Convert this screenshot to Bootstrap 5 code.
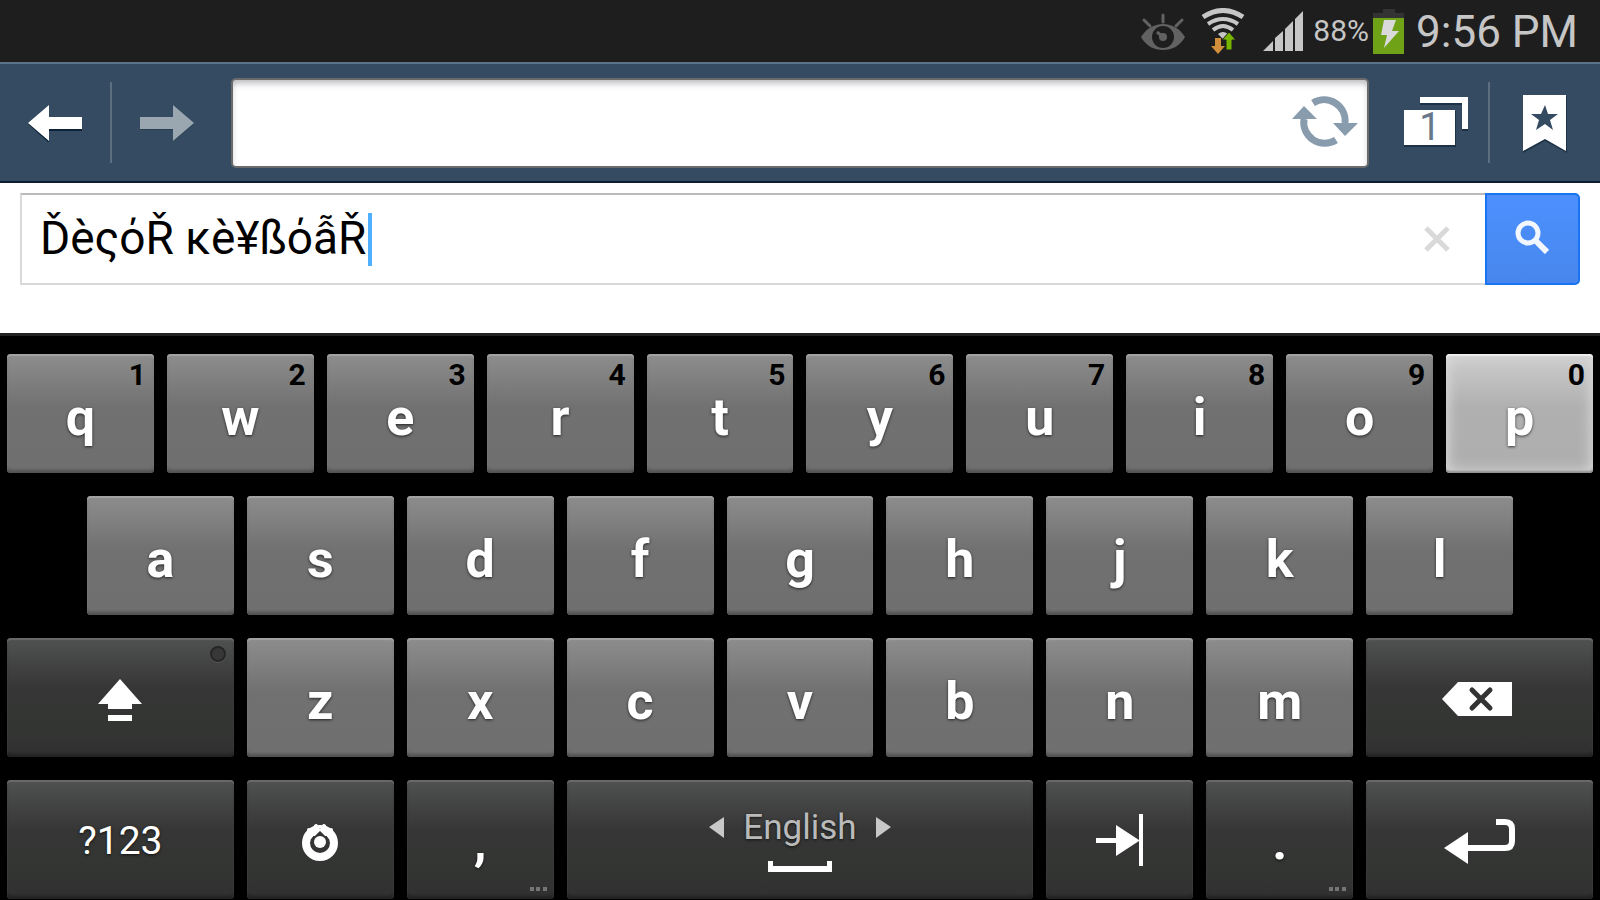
<!DOCTYPE html>
<html lang="en">
<head>
<meta charset="utf-8">
<meta name="viewport" content="width=device-width, initial-scale=1">
<title>Browser with keyboard</title>
<link href="https://cdn.jsdelivr.net/npm/bootstrap@5.3.0/dist/css/bootstrap.min.css" rel="stylesheet">
<style>
  body { font-family: Roboto, "Noto Sans", sans-serif; background: #000; }
  svg { display: block; flex: none; }

  .status { background: #1e1e1e; color: #c6c6c6; height: 62px; padding-right: 22px; line-height: 1; }
  .status .percent { font-size: 30px; }
  .status .clock { font-size: 44px; padding-top: 2px; }
  .status .eye { margin-right: 16px; }
  .status .wifi { margin-right: 18px; }
  .status .battery { margin: 0 12px 0 4px; }

  .toolbar { background: #344b61; height: 121px; border-top: 2px solid #5b7389; border-bottom: 2px solid #0b1d2e; }
  .tool { width: 110px; height: 100%; border: 0; border-radius: 0; padding: 2px 0 0; }
  .tool.tabs { width: 104px; margin-left: 15px; padding: 0; }
  .rule { width: 2px; height: 81px; background: #5b6f81; }
  .address { margin-left: 9px; height: 90px; border: 2px solid #6b6b6b; border-radius: 5px; background: #fff; box-shadow: inset 0 5px 7px -2px #b5b5ba; }
  .address input { border: 0; background: transparent; box-shadow: none; height: 100%; font-size: 36px; }
  .address button { border: 0; padding: 0 9px 2px; }
  .tabcount { font-size: 38px; fill: #66788a; }

  .page { height: 150px; padding: 10px 20px 48px 20px; }
  .query { border: 2px solid #d9d9d9; border-top-color: #bababa; border-right: 0; }
  .query input { border: 0; border-radius: 0; padding: 0 18px 2px; height: 100%; font-size: 46px; color: #000; background: #fff; }
  .query .caret { left: 346px; top: 18px; width: 4px; height: 53px; background: #4fb0ff; }
  .query .clear { border: 0; padding: 0 35px; }
  .go { width: 95px; border: 2px solid #1a73f0; border-radius: 0 5px 5px 0; background: linear-gradient(#4d90fe, #4787ed); padding: 0 2px 5px 0; }

  .keyboard { background: #000; border-top: 3px solid #222; box-shadow: inset 0 1px #000; padding: 18px 7px 1px; display: grid; grid-template-columns: repeat(20, minmax(0, 1fr)); gap: 23px 13px; }
  .key { position: relative; grid-column: span 2; height: 119px; display: flex; align-items: center; justify-content: center; border: 0; border-radius: 4px; padding: 9px 0 0; line-height: 1; font-size: 52px; font-weight: 700; color: #fff; text-shadow: 0 1px 3px rgba(0, 0, 0, .7);
    background: linear-gradient(#8d8d8d, #717171 45%, #6f6f6f); box-shadow: inset 0 2px 1px #a3a3a3, inset 0 -4px 3px -1px #525252, inset 0 0 2px #8a8a8a; }
  .key.lit { background: linear-gradient(#cdcdcd, #b0b0b0 45%, #aeaeae); box-shadow: inset 0 2px 1px #eee, inset 0 -3px 2px -1px #909090, inset 0 0 14px 2px #dadada; }
  .key.dark { padding-top: 4px; background: linear-gradient(#505251, #353635 42%, #333533 75%, #303030); box-shadow: inset 0 2px 1px #6a6a6a, inset 0 -4px 3px -1px #222, inset 0 0 2px #4a4a4a; }
  .key.wide { grid-column: span 3; }
  .key.space { grid-column: span 6; }
  .key.mode { font-size: 39px; font-weight: 400; }
  .key.first { grid-column: 2 / span 2; }
  .hint { position: absolute; top: 6px; right: 8px; font-size: 30px; color: #000; text-shadow: none; }
  .lamp { position: absolute; top: 8px; right: 8px; width: 16px; height: 16px; border-radius: 50%; background: #373737; border: 2px solid #252625; box-shadow: 0 1px #555; }
  .dots { position: absolute; right: 7px; bottom: 8px; }
  .language { font-size: 35px; font-weight: 400; color: #bababa; gap: 19px; }
</style>
</head>
<body>
<header class="status d-flex align-items-center justify-content-end">
  <svg class="eye" width="44" height="37" viewBox="0 0 44 37" aria-hidden="true">
    <g stroke="#626262" stroke-width="3" stroke-linecap="round"><path d="M3 7l6 6M22 2v7M41 7l-6 6"/></g>
    <path d="M0 24C5 16 13 11 22 11s17 5 22 13c-5 9-13 13-22 13S5 33 0 24z" fill="#626262"/>
    <circle cx="22" cy="24" r="11" fill="#1e1e1e"/><circle cx="22" cy="24" r="4" fill="#626262"/><path d="M16 19l6 5" stroke="#626262" stroke-width="3"/>
  </svg>
  <svg class="wifi" width="44" height="46" viewBox="0 0 44 46" aria-hidden="true">
    <g fill="none" stroke="#c6c6c6"><path d="M2 9Q22-4 42 9" stroke-width="5"/><path d="M7 16Q22 6 37 16" stroke-width="4"/><path d="M12 22Q22 14 32 22" stroke-width="4"/></g>
    <path d="M17 26q5-4 10 0l-5 5z" fill="#c6c6c6"/>
    <path d="M14 30h6v8h4l-7 8-7-8h4z" fill="#d08f3a"/>
    <path d="M25 42V32h-4l7-8 7 8h-4v10z" fill="#76b400" stroke="#1e1e1e"/>
  </svg>
  <svg width="42" height="40" viewBox="0 0 42 40" class="me-2" aria-hidden="true">
    <path d="M0 40l10-10v10zM12 40V27l8-7v20zM22 40V18l8-8v30zM32 40V8l8-8v40z" fill="#c6c6c6"/>
  </svg>
  <span class="percent">88%</span>
  <svg class="battery" width="31" height="46" viewBox="0 0 31 46" aria-hidden="true">
    <path d="M10 1h12v4h9v5H0V5h10z" fill="#333"/><path d="M0 10h31v36H0z" fill="#70a217"/>
    <path d="M11 12h12l-4 11h7L11 40l3-13H8z" fill="#dadada"/>
  </svg>
  <span class="clock">9:56 PM</span>
</header>

<nav class="toolbar d-flex align-items-center" aria-label="Browser">
  <button class="btn tool d-flex align-items-center justify-content-center" aria-label="Back">
    <svg width="54" height="37" viewBox="0 0 54 37"><path d="M0 19L21 1v13h33v12H21v12z" fill="#0b2238"/><path d="M0 18L21 0v12h33v12H21v12z" fill="#fff"/></svg>
  </button>
  <div class="rule"></div>
  <button class="btn tool d-flex align-items-center justify-content-center" aria-label="Forward">
    <svg width="54" height="37" viewBox="0 0 54 37"><path d="M54 19L33 1v12H0v12h33v12z" fill="#2a3f52"/><path d="M54 18L33 0v12H0v12h33v12z" fill="#9aa7b0"/></svg>
  </button>
  <div class="address flex-grow-1 d-flex align-items-center">
    <input type="text" class="form-control" aria-label="Address">
    <button class="btn" aria-label="Reload">
      <svg width="66" height="52" viewBox="0 0 66 52">
        <g fill="none" stroke="#889cae" stroke-width="7"><path d="M21 7A21 21 0 0 1 53 27"/><path d="M44 44A21 21 0 0 1 12 23"/></g>
        <path d="M41 27h25L53 40zM0 23h25L12 10z" fill="#889cae"/>
      </svg>
    </button>
  </div>
  <button class="btn tool tabs d-flex align-items-center justify-content-center" aria-label="Windows">
    <svg width="66" height="54" viewBox="0 0 66 54">
      <path d="M17 2h48v33h-6V9H17zM1 15h52v36H1z" fill="#1d3246"/>
      <path d="M17 1h48v32h-6V7H17zM1 14h51v35H1z" fill="#fff"/>
      <text x="27" y="44" text-anchor="middle" class="tabcount">1</text>
    </svg>
  </button>
  <div class="rule"></div>
  <button class="btn tool d-flex align-items-center justify-content-center" aria-label="Bookmarks">
    <svg width="44" height="58" viewBox="0 0 44 58"><path d="M0 1h44v57L22 46 0 58z" fill="#1d3246"/><path d="M0 0h43v56L22 44 0 56z" fill="#fff"/>
      <path d="M22 10l3 9h10l-8 6 3 10-8-6-9 6 3-10-8-6h10z" fill="#344b61"/></svg>
  </button>
</nav>

<main class="page bg-white">
  <form class="d-flex h-100" onsubmit="return false">
    <div class="query position-relative flex-grow-1 d-flex align-items-center">
      <input type="text" class="form-control shadow-none" aria-label="Search" value="Ďèςό&#344; κè¥ßόẫ&#344;">
      <span class="caret position-absolute"></span>
      <button type="button" class="btn clear" aria-label="Clear">
        <svg width="26" height="26" viewBox="0 0 26 26"><path d="M2 2l22 22M24 2L2 24" stroke="#d9d9d9" stroke-width="5"/></svg>
      </button>
    </div>
    <button type="submit" class="btn go d-flex align-items-center justify-content-center" aria-label="Search">
      <svg width="34" height="34" viewBox="0 0 34 34" fill="none" stroke="#f2f6ff"><circle cx="13" cy="13" r="10" stroke-width="5"/><path d="M21 21l11 11" stroke-width="6"/></svg>
    </button>
  </form>
</main>

<section class="keyboard" aria-label="Keyboard">
  <button class="key">q<span class="hint">1</span></button>
  <button class="key">w<span class="hint">2</span></button>
  <button class="key">e<span class="hint">3</span></button>
  <button class="key">r<span class="hint">4</span></button>
  <button class="key">t<span class="hint">5</span></button>
  <button class="key">y<span class="hint">6</span></button>
  <button class="key">u<span class="hint">7</span></button>
  <button class="key">i<span class="hint">8</span></button>
  <button class="key">o<span class="hint">9</span></button>
  <button class="key lit">p<span class="hint">0</span></button>

  <button class="key first">a</button>
  <button class="key">s</button>
  <button class="key">d</button>
  <button class="key">f</button>
  <button class="key">g</button>
  <button class="key">h</button>
  <button class="key">j</button>
  <button class="key">k</button>
  <button class="key">l</button>

  <button class="key dark wide" aria-label="Shift">
    <svg width="44" height="42" viewBox="0 0 44 42"><path d="M22 0l22 25H34v5H10v-5H0zM10 36h24v6H10z" fill="#fff"/></svg>
    <span class="lamp"></span>
  </button>
  <button class="key">z</button>
  <button class="key">x</button>
  <button class="key">c</button>
  <button class="key">v</button>
  <button class="key">b</button>
  <button class="key">n</button>
  <button class="key">m</button>
  <button class="key dark wide" aria-label="Delete">
    <svg width="76" height="36" viewBox="0 0 76 36"><path d="M0 17L16 0h54v34H16z" fill="#fff"/><path d="M30 8l18 18M48 8L30 26" stroke="#333" stroke-width="5" stroke-linecap="round"/></svg>
  </button>

  <button class="key dark wide mode">?123</button>
  <button class="key dark" aria-label="Settings">
    <svg width="38" height="38" viewBox="0 0 38 38"><circle cx="19" cy="20" r="14" fill="none" stroke="#fff" stroke-width="8"/>
      <path d="M19 5l5 8h-10z" fill="#333"/>
      <path d="M15 3l2 4-4 4M23 3l-2 4 4 4M8 7l4 3-3 4M30 7l-4 3 3 4" fill="none" stroke="#fff" stroke-width="4" stroke-linecap="round"/>
      <circle cx="19" cy="19" r="6" fill="#fff"/></svg>
  </button>
  <button class="key dark">,
    <svg class="dots" width="17" height="4" viewBox="0 0 17 4"><path d="M0 0h4v4H0zM6 0h4v4H6zM13 0h4v4h-4z" fill="#757575"/></svg>
  </button>
  <button class="key dark space flex-column" aria-label="Space, English">
    <span class="language d-flex align-items-center">
      <svg width="15" height="21" viewBox="0 0 15 21"><path d="M15 0v21L0 10z" fill="#c8c8c8"/></svg>
      English
      <svg width="15" height="21" viewBox="0 0 15 21"><path d="M0 0v21l15-11z" fill="#c8c8c8"/></svg>
    </span>
    <svg class="mt-3" width="64" height="13" viewBox="0 0 64 13"><path d="M0 0h5v5h54V0h5v11H0z" fill="#fff"/></svg>
  </button>
  <button class="key dark" aria-label="Tab">
    <svg width="48" height="56" viewBox="0 0 48 56"><path d="M0 24h20V11l23 15V0h4v52h-4V27L20 42V29H0z" fill="#fff"/></svg>
  </button>
  <button class="key dark">.
    <svg class="dots" width="17" height="4" viewBox="0 0 17 4"><path d="M0 0h4v4H0zM6 0h4v4H6zM13 0h4v4h-4z" fill="#757575"/></svg>
  </button>
  <button class="key dark wide" aria-label="Enter">
    <svg width="71" height="46" viewBox="0 0 71 46"><path d="M0 29L24 13v32z" fill="#fff"/><path d="M52 3h9q7 0 7 7v12q0 7-7 7H22" fill="none" stroke="#fff" stroke-width="6"/></svg>
  </button>
</section>
<script src="https://cdn.jsdelivr.net/npm/bootstrap@5.3.0/dist/js/bootstrap.bundle.min.js"></script>
</body>
</html>
